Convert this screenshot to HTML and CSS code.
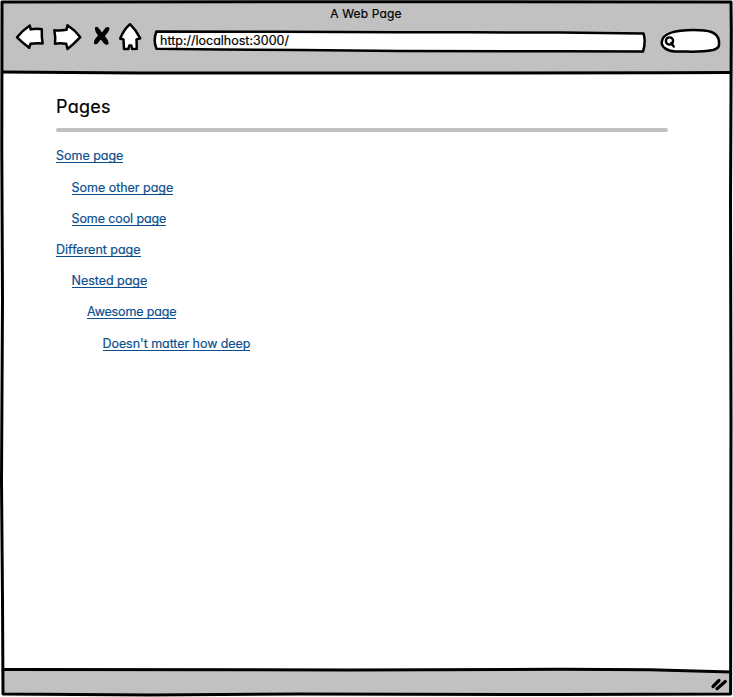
FILE: index.html
```html
<!DOCTYPE html>
<html lang="en">
<head>
<meta charset="utf-8">
<title>A Web Page</title>
<link rel="stylesheet" href="styles.css">
</head>
<body>
<div class="window">
  <svg class="frame" viewBox="0 0 733 697" aria-hidden="true">
    <path class="bar" d="M2 2H731V72L400 73L140 72L2 72Z"/>
    <path class="bar" d="M3 669L350 670L560 669L731 672V694L400 695L2 694Z"/>
    <path class="line" d="M2 2L400 1.8L731 2L731.3 30L730.5 200L731 420L730.6 694L560 694.6L300 694L150 695L3 694L2.5 600L1.5 480L2.5 300L1.8 150L2 2Z"/>
    <path class="line" d="M2 72L140 73L400 73L665 72.8L731 72.5M3 669.5L350 670L560 669.2L650 669.8L731 672"/>
  </svg>
  <header class="chrome">
    <div class="title">A Web Page</div>
    <div class="toolbar">
      <svg class="icons" width="130" height="32" viewBox="14 22 130 32" aria-hidden="true">
        <path class="shape" d="M17 37.3Q23 30 29.8 25.5L30.7 29.4Q37 28 41.8 29.2Q41.6 37 42.6 43.5Q37 42.8 30.5 43.8L29.2 47.8Q23 43 17 37.3Z"/>
        <path class="shape" d="M54.3 30.2Q60 31 66.5 29.8L67.5 25.2Q75 30 80.3 37.2Q74 44 67.5 49L66.2 43.8Q60 42.8 55 43.7Q55.8 37 54.3 30.2Z"/>
        <path class="cross" d="M94.8 28.2Q96.5 25.4 99 28.5L102 32.5L105.5 27.8Q108 25.8 109.5 28.2Q109 32 104.8 36Q108.5 40 108.8 43.5Q107 46.2 104 43.5L100.8 39.5Q98.5 43 96 44.5Q93.5 44.3 94 41.5Q95 38.5 98 35.5Q95 32 94.8 28.2Z"/>
        <path class="shape" d="M130 24.2Q136 30 140.2 38.3L136.5 39.5L136.8 48.8L132.2 49L131.3 45.5H129.3L128.4 49L124 49L123.5 39.5L120.2 38.5Q124 29 130 24.2Z"/>
      </svg>
      <div class="address">
        <svg class="outline" viewBox="152 29 496 25" aria-hidden="true"><path class="shape" d="M156.3 31.5L280 31.8L400 32.2L470 32.3L560 32.6L643.5 33.4Q646 42 643 51.5L560 51.2L400 51L300 50L220 49.5L156.5 48.8Q153 41 156.3 31.5Z"/></svg>
        <span class="url">http://localhost:3000/</span>
      </div>
      <svg class="search" width="64" height="28" viewBox="658 27 64 28" aria-hidden="true">
        <path class="shape" d="M661.8 41.5C663 32 678 30 694 30C709 30 717 32 718.8 40C719.8 46 719 48.5 713 50C697 53 687 51 675 51.5C667 51 661 47 661.8 41.5Z"/>
        <circle class="lens" cx="669.5" cy="41" r="3.6"/><path class="lens" d="M671.2 43L673.8 46.6"/>
      </svg>
    </div>
  </header>
  <main class="content">
    <h1 class="heading">Pages</h1>
    <nav class="tree">
      <a class="link">Some page</a>
      <a class="link level-1 other">Some other page</a>
      <a class="link level-1 cool">Some cool page</a>
      <a class="link different">Different page</a>
      <a class="link level-1 nested">Nested page</a>
      <a class="link level-2 awesome">Awesome page</a>
      <a class="link level-3 deep">Doesn't matter how deep</a>
    </nav>
  </main>
  <svg class="grip" viewBox="709 676 20 16" aria-hidden="true"><path d="M713 686.5L719 680.5M717 688.8L725.3 681.5"/></svg>
</div>
</body>
</html>
```
FILE: styles.css
```css
* { box-sizing: border-box; }
body { margin: 0; background: #fff; }
.window {
  position: relative;
  width: 733px;
  height: 697px;
  overflow: hidden;
  font: 12.5px/16px Inter, "Liberation Sans", sans-serif;
  font-feature-settings: "cv11";
  letter-spacing: -0.02px;
  -webkit-text-stroke: 0.2px;
  color: #000;
}
.frame { position: absolute; inset: 0; width: 733px; height: 697px; }
.bar { fill: #c1c1c1; }
.line { fill: none; stroke: #000; stroke-width: 3; stroke-linejoin: round; }
.shape { fill: #fff; stroke: #000; stroke-width: 2.5; stroke-linejoin: round; }
.cross { fill: #000; }
.lens { fill: none; stroke: #000; stroke-width: 2.4; stroke-linecap: round; }
.chrome { position: relative; height: 74px; padding-top: 6px; }
.title { width: 732px; text-align: center; font-size: 12px; letter-spacing: 0.15px; }
.toolbar { display: flex; align-items: flex-start; padding-left: 14px; }
.icons { display: block; flex: none; }
.address { position: relative; width: 496px; height: 25px; margin: 7px 0 0 8px; padding: 4px 0 0 8px; }
.outline { position: absolute; inset: 0; width: 496px; height: 25px; }
.url { position: relative; display: inline-block; letter-spacing: 0; }
.search { display: block; flex: none; margin: 5px 0 0 10px; }
.content { position: relative; padding: 20px 65px 0 56px; }
.heading {
  position: relative;
  height: 38px;
  margin: 0;
  font-size: 18px;
  line-height: 25px;
  font-weight: 400;
  letter-spacing: 0.25px;
}
.heading::after {
  content: "";
  position: absolute;
  inset: auto 0 0;
  height: 4px;
  border-radius: 2px;
  background: #c0c0c0;
}
.tree { display: flex; flex-direction: column; align-items: flex-start; gap: 16.2px; padding-top: 16.4px; }
.link { height: 15px; border-bottom: 1px solid #0b4f8f; color: #0b4f8f; line-height: 15px; white-space: nowrap; }
.level-1 { margin-left: 15.5px; }
.level-2 { margin-left: 31px; }
.level-3 { margin-left: 46.5px; }
.cool { letter-spacing: -0.1px; }
.awesome { letter-spacing: -0.15px; }
.deep { letter-spacing: -0.06px; }
.grip { position: absolute; left: 709px; top: 676px; width: 20px; height: 16px; }
.grip path { fill: none; stroke: #000; stroke-width: 3.2; stroke-linecap: round; }
```
